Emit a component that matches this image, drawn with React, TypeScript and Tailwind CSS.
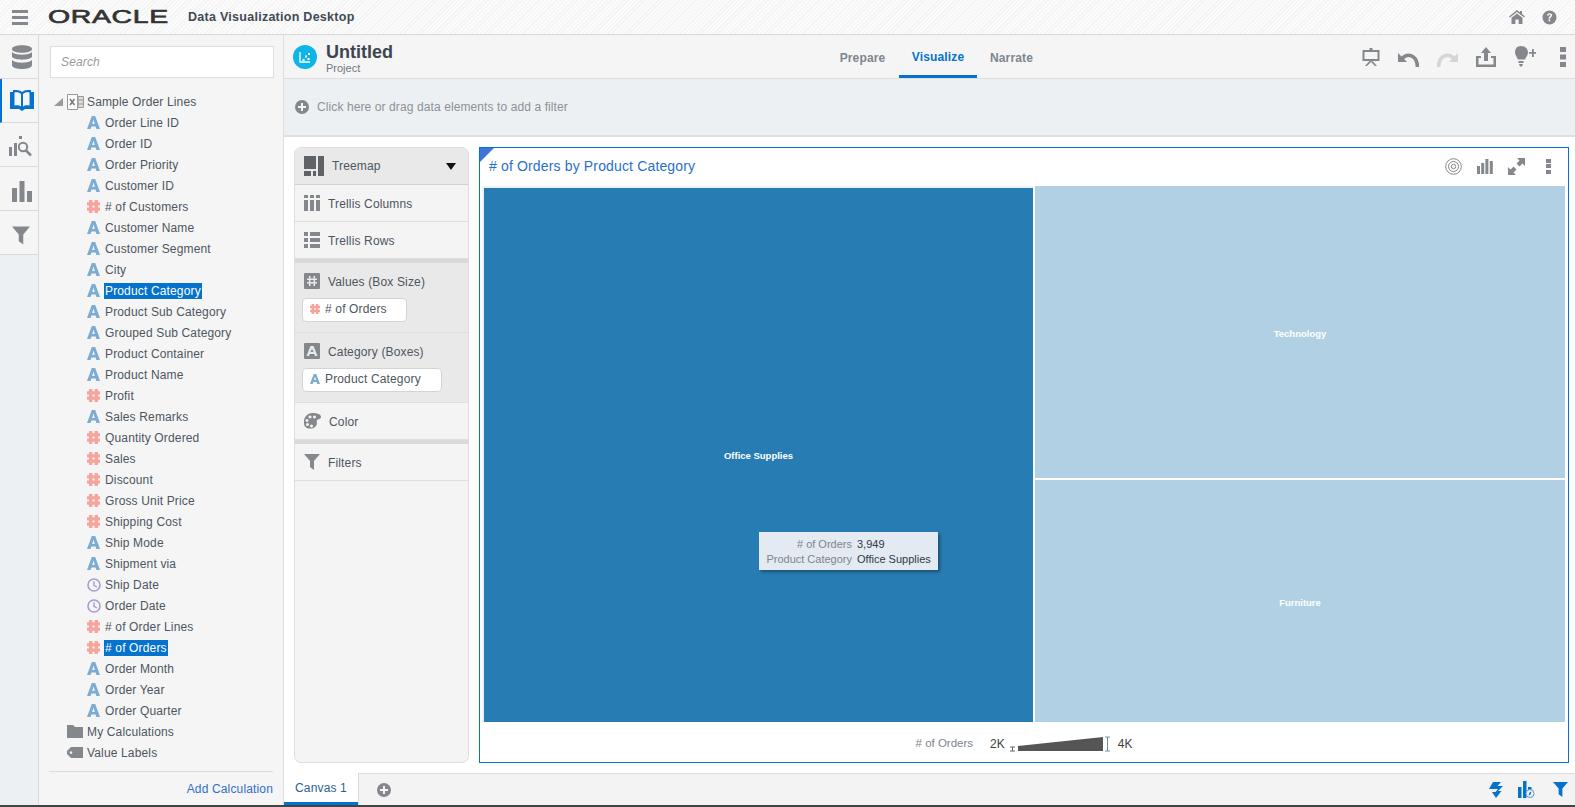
import React from "react";

const G = "#84888c";

function AIcon({ size = 13 }: { size?: number }) {
  return (
    <svg width={size} height={size} viewBox="0 0 13 13" className="shrink-0">
      <path fillRule="evenodd" fill="#7cadd1" d="M4.8 0h3.4L13 13H9.4l-.8-2.6H4.4L3.6 13H0zM6.5 3.6 5.2 7.9h2.6z" />
    </svg>
  );
}
function HashIcon({ size = 13 }: { size?: number }) {
  return (
    <svg width={size} height={size} viewBox="0 0 13 13" className="shrink-0">
      <path fill="#f5a59b" d="M2 0h3.4v13H2zM7.6 0H11v13H7.6zM0 2.2h13v3.2H0zM0 7.6h13v3.2H0z" />
    </svg>
  );
}
function ClockIcon() {
  return (
    <svg width={14} height={14} viewBox="0 0 14 14" className="shrink-0">
      <circle cx="7" cy="7" r="6" fill="none" stroke="#a99bd6" strokeWidth="1.6" />
      <path d="M7 3.2V7.4L10 9" fill="none" stroke="#a99bd6" strokeWidth="1.4" />
    </svg>
  );
}
function TreemapIcon() {
  return (
    <svg width={20} height={20} viewBox="0 0 20 20" className="shrink-0">
      <path fill="#5f6266" d="M0 0h12v13H0zM14 0h6v20h-6zM0 15h7v5H0zM9 15h3v5H9z" />
    </svg>
  );
}
function TrellisCols() {
  return (
    <svg width={16} height={16} viewBox="0 0 16 16" className="shrink-0">
      <path fill={G} d="M0 0h4v3H0zM6 0h4v3H6zM12 0h4v3h-4zM0 5h4v11H0zM6 5h4v11H6zM12 5h4v11h-4z" />
    </svg>
  );
}
function TrellisRows() {
  return (
    <svg width={16} height={16} viewBox="0 0 16 16" className="shrink-0">
      <path fill={G} d="M0 0h4v4H0zM6 0h10v4H6zM0 6h4v4H0zM6 6h10v4H6zM0 12h4v4H0zM6 12h10v4H6z" />
    </svg>
  );
}
function Funnel({ color = G, w = 16, h = 16 }: { color?: string; w?: number; h?: number }) {
  return (
    <svg width={w} height={h} viewBox="0 0 16 16" className="shrink-0">
      <path fill={color} d="M0 0h16L10 7v9l-4-3V7z" />
    </svg>
  );
}
function Plus({ size = 14 }: { size?: number }) {
  return (
    <svg width={size} height={size} viewBox="0 0 14 14" className="shrink-0">
      <circle cx="7" cy="7" r="7" fill={G} />
      <path d="M3 5.9h3V3h2v2.9h3v2H8V11H6V7.9H3z" fill="#f5f5f5" />
    </svg>
  );
}
function Kebab() {
  return (
    <svg width={6} height={20} viewBox="0 0 6 20" className="shrink-0">
      <path fill={G} d="M0 0h6v5H0zM0 7.5h6v5H0zM0 15h6v5H0z" />
    </svg>
  );
}

const fields: [string, "a" | "h" | "c", boolean?][] = [
  ["Order Line ID", "a"], ["Order ID", "a"], ["Order Priority", "a"], ["Customer ID", "a"],
  ["# of Customers", "h"], ["Customer Name", "a"], ["Customer Segment", "a"], ["City", "a"],
  ["Product Category", "a", true], ["Product Sub Category", "a"], ["Grouped Sub Category", "a"],
  ["Product Container", "a"], ["Product Name", "a"], ["Profit", "h"], ["Sales Remarks", "a"],
  ["Quantity Ordered", "h"], ["Sales", "h"], ["Discount", "h"], ["Gross Unit Price", "h"],
  ["Shipping Cost", "h"], ["Ship Mode", "a"], ["Shipment via", "a"], ["Ship Date", "c"],
  ["Order Date", "c"], ["# of Order Lines", "h"], ["# of Orders", "h", true], ["Order Month", "a"],
  ["Order Year", "a"], ["Order Quarter", "a"],
];

function FieldRow({ name, kind, sel }: { name: string; kind: "a" | "h" | "c"; sel?: boolean }) {
  return (
    <div className="flex h-[21px] items-center pl-[48px]">
      <span className="flex w-[17px] shrink-0 justify-start">
        {kind === "a" ? <AIcon /> : kind === "h" ? <HashIcon /> : <ClockIcon />}
      </span>
      <span className={sel ? "flex h-[16px] items-center bg-[#0572ce] px-px text-white" : "px-px"}>{name}</span>
    </div>
  );
}

function RailTab({ children, active }: { children: React.ReactNode; active?: boolean }) {
  return (
    <div className={`flex h-[44px] items-center justify-center border-b border-[#d9d9d9] bg-[#f5f5f5] ${active ? "border-l-2 border-l-[#0572ce]" : ""}`}>
      {children}
    </div>
  );
}

function ConfigRow({ icon, label }: { icon: React.ReactNode; label: string }) {
  return (
    <div className="flex h-[37px] items-center gap-[8px] border-b border-[#dedede] pl-[9px]">
      {icon}
      <span className="pt-[2px]">{label}</span>
    </div>
  );
}

function Section({ icon, label, pillW, pillIcon, pill }: { icon: React.ReactNode; label: string; pillW: string; pillIcon: React.ReactNode; pill: string }) {
  return (
    <div className="h-[70px] border-b border-[#dedede] bg-[#e9e9e9] pl-[7px] pt-[9px]">
      <div className="flex h-[18px] items-center gap-[8px] pl-[2px]">
        {icon}
        <span className="pt-[2px]">{label}</span>
      </div>
      <div className={`mt-[8px] flex h-[24px] items-center gap-[5px] rounded-[4px] border border-[#d4d4d4] bg-white pb-[2px] pl-[7px] ${pillW}`}>
        {pillIcon}
        <span>{pill}</span>
      </div>
    </div>
  );
}

export default function App() {
  return (
    <div className="flex h-[807px] w-[1575px] flex-col overflow-hidden bg-white font-['Liberation_Sans',Arial,sans-serif] text-[12px] tracking-[0.15px] text-[#4d5661]">
      {/* top header */}
      <header className="flex h-[35px] shrink-0 items-center border-b border-[#d9d9d9] bg-[repeating-linear-gradient(135deg,#f3f3f3_0px,#f3f3f3_1px,#fbfbfb_1px,#fbfbfb_3px)]">
        <div className="ml-[12px] flex h-[15px] w-[16px] flex-col justify-between">
          <div className="h-[3px] bg-[#84888c]" />
          <div className="h-[3px] bg-[#84888c]" />
          <div className="h-[3px] bg-[#84888c]" />
        </div>
        <div className="ml-[20px] w-[120px] origin-left scale-x-[1.58] text-[18px] leading-none tracking-[0.4px] text-[#333] [-webkit-text-stroke:0.6px_#333]">ORACLE</div>
        <div className="ml-[20px] text-[12.5px] font-bold tracking-[0.27px] text-[#3f4a55]">Data Visualization Desktop</div>
        <div className="ml-auto mr-[18px] flex items-center gap-[17px]">
          <svg width={16} height={14} viewBox="0 0 16 14"><path fill={G} d="M8 0l3 2.4V1h2v3l3 2.6-.8 1L8 2 .8 7.6 0 6.6zM8 3.4l5.5 4.4V14H9.6V9.6H6.4V14H2.5V7.8z" /></svg>
          <svg width={15} height={15} viewBox="0 0 15 15">
            <circle cx="7.5" cy="7.5" r="7" fill={G} />
            <path d="M5 5.6c.1-1.6 1.2-2.3 2.6-2.3s2.5.8 2.5 2c0 1.9-2 1.8-2 3.4H6.6c0-2.4 1.9-2.3 1.9-3.3 0-.5-.4-.8-.9-.8-.6 0-1 .4-1 1zM6.6 9.6h1.6v1.7H6.6z" fill="#fff" />
          </svg>
        </div>
      </header>

      <div className="flex min-h-0 flex-1">
        {/* rail */}
        <nav className="w-[39px] shrink-0 border-r border-[#d9d9d9] bg-[#edf0f3]">
          <RailTab>
            <svg width={20} height={24} viewBox="0 0 20 24" className="ml-[5px]">
              <path fill={G} d="M0 4c0-5 20-5 20 0s-20 5-20 0zM0 7c3 3.5 17 3.5 20 0v5c-3 3.5-17 3.5-20 0zM0 15c3 3.5 17 3.5 20 0v5c0 5.300-20 5.300-20 0z" />
            </svg>
          </RailTab>
          <RailTab active>
            <svg width={24} height={21} viewBox="0 0 24 21" className="ml-[3px]">
              <path fill="#0572ce" d="M0 2h3V0c3-.2 7 0 9 2 2-2 6-2.200 9-2v2h3v17h-9l-3 2-3-2H0z" />
              <path fill="#f5f5f5" d="M4.500 2.500c2.500-.5 5 0 6.500 1.500v12.500c-2-1.500-4-1.500-6.500-1zM19.500 2.500c-2.500-.5-5 0-6.500 1.500v12.500c2-1.500 4-1.500 6.500-1z" />
            </svg>
          </RailTab>
          <RailTab>
            <svg width={24} height={22} viewBox="0 0 24 22" className="ml-[4px] mt-[4px]">
              <path fill={G} d="M0 11h3v9H0zM5 7h3v13H5zM10 0h3v3h-3z" />
              <circle cx="14" cy="11" r="4.200" fill="none" stroke={G} strokeWidth="2" />
              <path d="M17 14.500l5 5" stroke={G} strokeWidth="2.500" />
            </svg>
          </RailTab>
          <RailTab>
            <svg width={20} height={21} viewBox="0 0 20 21" className="ml-[5px] mt-[5px]"><path fill={G} d="M0 7h5v14H0zM7.500 0h5v21h-5zM15 10h5v11h-5z" /></svg>
          </RailTab>
          <RailTab>
            <span className="ml-[4px] mt-[5px]"><Funnel w={18} h={19} /></span>
          </RailTab>
        </nav>

        {/* data panel */}
        <aside className="flex w-[245px] shrink-0 flex-col border-r border-[#dedede] bg-[#f5f5f5]">
          <div className="ml-[11px] mt-[11px] flex h-[32px] w-[224px] items-center border border-[#dcdfe2] bg-white pl-[10px] text-[12px] italic text-[#999]">Search</div>
          <div className="mt-[13px] flex-1">
            <div className="flex h-[21px] items-center pl-[15px]">
              <svg width={9} height={8} viewBox="0 0 9 8" className="shrink-0"><path fill="#9a9a9a" d="M9 0v8H0z" /></svg>
              <svg width={17} height={16} viewBox="0 0 17 16" className="ml-[4px] shrink-0">
                <path d="M.5.500h10v15H.500z" fill="#fbfbfb" stroke="#999" />
                <path d="M3 5l4.500 6M7.500 5L3 11" stroke="#777" strokeWidth="1.500" />
                <path d="M11 2.500h5.500v11H11z" fill="#ddd" stroke="#999" />
                <path d="M11 6h5.500M11 10h5.500" stroke="#999" />
              </svg>
              <span className="ml-[3px]">Sample Order Lines</span>
            </div>
            {fields.map(([n, k, s]) => (
              <FieldRow key={n} name={n} kind={k} sel={s} />
            ))}
            <div className="flex h-[21px] items-center pl-[28px]">
              <svg width={16} height={13} viewBox="0 0 16 13" className="shrink-0"><path fill={G} d="M0 0h6l2 2h8v11H0z" /></svg>
              <span className="ml-[4px]">My Calculations</span>
            </div>
            <div className="flex h-[21px] items-center pl-[28px]">
              <svg width={16} height={11} viewBox="0 0 16 11" className="shrink-0">
                <path fillRule="evenodd" fill={G} d="M4 0h12v11H4L0 7V4zM4 4.200a1.300 1.300 0 1 0 .01 0z" />
              </svg>
              <span className="ml-[4px]">Value Labels</span>
            </div>
          </div>
          <div className="mx-[10px] flex h-[34px] items-center justify-end border-t border-[#dcdcdc] text-[#2f6fd0]">Add Calculation</div>
        </aside>

        {/* main column */}
        <main className="flex min-w-0 flex-1 flex-col">
          <div className="flex h-[44px] shrink-0 items-center border-b border-[#dedede] bg-[#f5f5f5]">
            <svg width={24} height={24} viewBox="0 0 24 24" className="ml-[9px] shrink-0">
              <circle cx="12" cy="12" r="12" fill="#0fb4e8" />
              <path d="M7 7v10h10" fill="none" stroke="#fff" strokeWidth="1.300" />
              <path d="M9.500 14h2v2h-2zM12 10.500h2v2h-2zM14.500 13h2v2h-2zM15 8h2v2h-2z" fill="#fff" />
            </svg>
            <div className="ml-[9px] w-[109px] pt-[4px]">
              <div className="text-[18px] font-bold leading-[20px] tracking-normal text-[#3d4650]">Untitled</div>
              <div className="text-[11px] leading-[13px] tracking-normal text-[#6f7780]">Project</div>
            </div>
            <div className="ml-[391px] flex h-full items-stretch text-[12px] font-bold text-[#7e868e]">
              <div className="flex w-[73px] items-center justify-center pt-[3px]">Prepare</div>
              <div className="flex w-[78px] flex-col items-center justify-center border-b-[3px] border-[#0572ce] pt-[3px] text-[#0572ce]">Visualize</div>
              <div className="flex w-[69px] items-center justify-center pt-[3px]">Narrate</div>
            </div>
            <div className="ml-auto mr-[8px] flex items-center gap-[18px]">
              <svg width={18} height={18} viewBox="0 0 18 18">
                <path fill="none" stroke={G} strokeWidth="2" d="M1.500 3h15v9h-15z" />
                <path fill={G} d="M7.500 0h3v2h-3zM8 12h2v2H8zM7.500 13l1.500 1-4 4H3zM10.500 13L9 14l4 4h2z" />
              </svg>
              <svg width={21} height={16} viewBox="0 0 21 16" className="mt-[5px]">
                <path fill={G} d="M0 2v9h9z" />
                <path d="M4 7.500C9 2 19 3 19.500 16" fill="none" stroke={G} strokeWidth="3.600" />
              </svg>
              <svg width={21} height={16} viewBox="0 0 21 16" className="mt-[5px]">
                <path fill="#d4d5d6" d="M21 2v9h-9z" />
                <path d="M17 7.500C12 2 2 3 1.500 16" fill="none" stroke="#d4d5d6" strokeWidth="3.600" />
              </svg>
              <svg width={20} height={20} viewBox="0 0 20 20"><path fill={G} d="M10 0l5 6h-3v8H8V6H5zM0 9h5v2H2.500v6.500h15V11H15V9h5v11H0z" /></svg>
              <svg width={22} height={21} viewBox="0 0 22 21" className="-mt-[1px]">
                <path fill={G} d="M7 0c4 0 7 2.800 7 6.500 0 3-2.300 4.500-3 7H4c-.7-2.500-3-4-3-7C1 2.800 3 0 7 0zM4.500 15h5v2h-5zM5 18h4l-1 2.500H6z" />
                <path fill={G} d="M15 6h3V3h1.800v3H22v1.800h-2.200V11H18V7.800h-3z" />
              </svg>
              <span className="ml-[6px] mr-[1px]"><Kebab /></span>
            </div>
          </div>

          <div className="flex h-[58px] shrink-0 items-center border-b-2 border-[#e0e0e0] bg-[#edf0f3] pl-[11px] text-[12px] tracking-[0.1px] text-[#8b9299]">
            <Plus />
            <span className="ml-[8px]">Click here or drag data elements to add a filter</span>
          </div>

          <div className="flex min-h-0 flex-1 gap-[10px] pb-[10px] pl-[10px] pr-[6px] pt-[10px]">
            {/* config */}
            <div className="w-[175px] shrink-0 overflow-hidden rounded-[7px] border border-[#dedede] bg-[#f4f4f4]">
              <div className="flex h-[37px] items-center border-b border-[#d3d3d3] bg-[#e9e9e9] pl-[9px]">
                <TreemapIcon />
                <span className="ml-[8px] flex-1">Treemap</span>
                <svg width={10} height={7} viewBox="0 0 10 7" className="mr-[12px]"><path d="M0 0h10L5 7z" fill="#111" /></svg>
              </div>
              <ConfigRow icon={<TrellisCols />} label="Trellis Columns" />
              <ConfigRow icon={<TrellisRows />} label="Trellis Rows" />
              <div className="h-[4px] bg-[#d9d9d9]" />
              <Section
                icon={<svg width={16} height={16} viewBox="0 0 16 16" className="shrink-0"><path fillRule="evenodd" fill={G} d="M1 0h14a1 1 0 0 1 1 1v14a1 1 0 0 1-1 1H1a1 1 0 0 1-1-1V1a1 1 0 0 1 1-1zM5 3v2.500H3v1.500h2v2H3v1.500h2V13h1.500v-2.500h3V13H11v-2.500h2V9h-2V7h2V5.500h-2V3H9.500v2.500h-3V3zM6.500 7h3v2h-3z" /></svg>}
                label="Values (Box Size)"
                pillW="w-[105px]"
                pillIcon={<HashIcon size={10} />}
                pill="# of Orders"
              />
              <Section
                icon={<svg width={16} height={16} viewBox="0 0 16 16" className="shrink-0"><path fillRule="evenodd" fill={G} d="M1 0h14a1 1 0 0 1 1 1v14a1 1 0 0 1-1 1H1a1 1 0 0 1-1-1V1a1 1 0 0 1 1-1zM6.500 3 2.500 13H5l.7-2h4.600l.7 2h2.500L9.500 3zM8 5.800 9.500 9h-3z" /></svg>}
                label="Category (Boxes)"
                pillW="w-[140px]"
                pillIcon={<AIcon size={10} />}
                pill="Product Category"
              />
              <ConfigRow
                icon={
                  <svg width={17} height={16} viewBox="0 0 17 16" className="shrink-0">
                    <path fillRule="evenodd" fill={G} d="M8 0c5 0 9 1 9 4 0 2-3 2-4 3-1 1.500 1 3-1 6-2 3-8 3.500-10.500 1C-1 11.500-.5 6 2 3 3.500 1 6 0 8 0zM6 2.500a1.500 1.500 0 1 0 .01 0zM3 6a1.500 1.500 0 1 0 .01 0zM3.500 10a1.500 1.500 0 1 0 .01 0zM7.500 11.500a1.500 1.500 0 1 0 .01 0zM10.500 2.500a1.500 1.500 0 1 0 .01 0z" />
                  </svg>
                }
                label="Color"
              />
              <div className="h-[4px] bg-[#d9d9d9]" />
              <ConfigRow icon={<Funnel />} label="Filters" />
            </div>

            {/* chart */}
            <div className="relative flex min-w-0 flex-1 flex-col border border-[#0572ce] bg-white">
              <svg width={14} height={14} viewBox="0 0 14 14" className="absolute left-0 top-0"><path d="M0 0h14L0 14z" fill="#3f74d8" /></svg>
              <div className="flex h-[38px] shrink-0 items-center pb-[2px] pl-[9px] pr-[17px] text-[14px] tracking-[0.15px] text-[#2a6fc9]">
                <span>{"# of Orders by Product Category"}</span>
                <div className="ml-auto flex items-center gap-[15px]">
                  <svg width={17} height={17} viewBox="0 0 17 17">
                    <circle cx="8.500" cy="8.500" r="7.800" fill="none" stroke={G} />
                    <circle cx="8.500" cy="8.500" r="5" fill="none" stroke={G} />
                    <circle cx="8.500" cy="8.500" r="2.200" fill="none" stroke={G} />
                  </svg>
                  <svg width={16} height={15} viewBox="0 0 16 15"><path fill={G} d="M0 7h3v8H0zM4.200 4h3v11h-3zM8.400 0h3v15h-3zM12.800 2h3v13h-3z" /></svg>
                  <svg width={17} height={17} viewBox="0 0 17 17"><path fill={G} d="M9 0h8v8l-2.500-2.500-3 3-3-3 3-3zM0 9l2.500 2.500 3-3 3 3-3 3L8 17H0z" /></svg>
                  <span className="ml-[6px] flex h-[15px] w-[5px] flex-col justify-between">
                    <span className="h-[4px] bg-[#84888c]" />
                    <span className="h-[4px] bg-[#84888c]" />
                    <span className="h-[4px] bg-[#84888c]" />
                  </span>
                </div>
              </div>
              <div className="relative flex min-h-0 flex-1 gap-[2px] pl-[2px] pr-[3px] text-[9.5px] font-bold tracking-normal text-white">
                <div className="flex w-[551px] items-center justify-center border-2 border-b-0 border-r-0 border-[#eef2f5] bg-[#277cb3] pt-[2px]">Office Supplies</div>
                <div className="flex min-w-0 flex-1 flex-col gap-[2px]">
                  <div className="flex h-[292px] items-center justify-center bg-[#b1d0e4] pt-[5px]">Technology</div>
                  <div className="flex flex-1 items-center justify-center bg-[#b1d0e4] pt-[4px]">Furniture</div>
                </div>
                <div className="absolute left-[279px] top-[346px] grid h-[38px] w-[179px] grid-cols-[93px_1fr] content-center gap-x-[5px] bg-[#e4eaf1] pt-[2px] text-[11px] font-normal leading-[15px] text-[#2f3a45] shadow-[2px_2px_3px_rgba(0,0,0,0.35)]">
                  <span className="text-right text-[#7d858d]"># of Orders</span>
                  <span>3,949</span>
                  <span className="text-right text-[#7d858d]">Product Category</span>
                  <span>Office Supplies</span>
                </div>
              </div>
              <div className="flex h-[40px] shrink-0 items-center justify-center pt-[4px] text-[12px] tracking-normal">
                <span className="mr-[17px] text-[11.5px] text-[#7d858d]"># of Orders</span>
                <span className="mr-[4px] text-[#3b3f44]">2K</span>
                <svg width={100} height={16} viewBox="0 0 100 16" className="mx-[1px]">
                  <path d="M0 11h5M0 15h5M2.500 11v4" stroke="#666" strokeWidth="1" fill="none" />
                  <path d="M8 10 93 1v14H8z" fill="#555" />
                  <path d="M95 1h5M95 15h5M97.500 1v14" stroke="#7790aa" strokeWidth="1" fill="none" />
                </svg>
                <span className="ml-[7px] text-[#3b3f44]">4K</span>
              </div>
            </div>
          </div>

          {/* bottom tabs */}
          <div className="flex h-[32px] shrink-0 items-stretch bg-white">
            <div className="flex w-[74px] items-center justify-center border-b-[3px] border-[#0572ce] text-[12px] text-[#2d5f8f]">Canvas 1</div>
            <div className="flex flex-1 items-center border-l border-t border-[#dcdcdc] bg-[#f3f3f3] pl-[18px]">
              <Plus />
              <div className="ml-auto mr-[6px] flex items-center gap-[15px]">
                <svg width={14} height={16} viewBox="0 0 14 16"><path fill="#0572ce" d="M4 0h8L8.500 4H14L9 9h3.500L7 16 3 10h3.500L9 7H0z" /></svg>
                <svg width={17} height={17} viewBox="0 0 17 17">
                  <path fill="#0572ce" d="M0 6h3.500v11H0zM5 0h3.500v17H5zM10 6h3.500v4H10z" />
                  <circle cx="12" cy="12.500" r="4" fill="#f3f3f3" stroke="#5e93d8" />
                  <path d="M10.500 14.500l1-3 2-1-1 3z" fill="#0572ce" />
                </svg>
                <span className="ml-[3px] mr-[1px]"><Funnel color="#0572ce" w={15} h={15} /></span>
              </div>
            </div>
          </div>
        </main>
      </div>
      <div className="h-[2px] shrink-0 bg-[#444]" />
    </div>
  );
}
